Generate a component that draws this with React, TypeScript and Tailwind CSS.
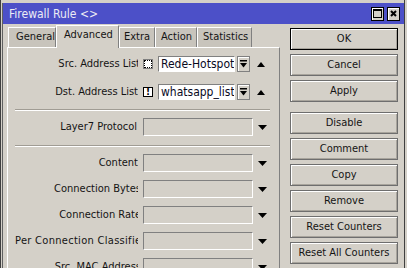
import React from "react";

// inner: width the text is right-aligned to; the 123px box clips it
const listRows = [
  { label: "Src. Address List", inner: "w-[125px]", value: "Rede-Hotspot", flag: "dotted" },
  { label: "Dst. Address List", inner: "w-[123px]", value: "whatsapp_list", flag: "bang" },
];

const comboRows = [
  { label: "Content", inner: "w-[123px]" },
  { label: "Connection Bytes", inner: "w-[126px]" },
  { label: "Connection Rate", inner: "w-[126px]" },
  { label: "Per Connection Classifier", inner: "w-[123px] tracking-[0.3px]" },
  { label: "Src. MAC Address", inner: "w-[126px]" },
];

const tabs = [
  { name: "General", w: "w-[48px]", pad: "pl-[7px]" },
  { name: "Advanced", w: "w-[63px]", pad: "pl-[7px]", active: true },
  { name: "Extra", w: "w-[36px]", pad: "pl-[4px]" },
  { name: "Action", w: "w-[42px]", pad: "pl-[5px]" },
  { name: "Statistics", w: "w-[55px]", pad: "pl-[5px]" },
];

const buttons = [
  ["OK", "Cancel", "Apply"],
  ["Disable", "Comment", "Copy", "Remove", "Reset Counters", "Reset All Counters"],
];

const sunken =
  "border border-t-[#808080] border-l-[#808080] border-b-white border-r-white";

function Label({ text, inner }: { text: string; inner: string }) {
  return (
    <div className="w-[123px] shrink-0 overflow-hidden">
      <div className={`${inner} whitespace-nowrap text-right text-[11px] text-[#141414]`}>{text}</div>
    </div>
  );
}

function DownArrow() {
  return (
    <svg width="9" height="5" viewBox="0 0 9 5">
      <polygon points="0,0 9,0 4.5,5" fill="#000" />
    </svg>
  );
}

function UpArrow() {
  return (
    <svg width="8" height="5" viewBox="0 0 8 5">
      <polygon points="0,5 8,5 4,0" fill="#000" />
    </svg>
  );
}

function DropMore() {
  return (
    <svg width="7" height="8" viewBox="0 0 7 8">
      <rect x="0" y="0" width="7" height="1.5" fill="#000" />
      <polygon points="0,3 7,3 3.5,7.5" fill="#000" />
    </svg>
  );
}

function Flag({ kind }: { kind: string }) {
  if (kind === "dotted") {
    return (
      <div className="ml-[5px] flex h-[10px] w-[10px] shrink-0 items-center justify-center border border-[#808080] bg-white">
        <div className="h-[8px] w-[8px] border border-dotted border-black" />
      </div>
    );
  }
  return (
    <div className="ml-[5px] flex h-[10px] w-[10px] shrink-0 items-center justify-center border border-black bg-white text-[10px] font-bold leading-none text-black">
      !
    </div>
  );
}

function Separator({ top }: { top: string }) {
  return <div className={`${top} mb-[3px] w-[255px] border-t border-b border-t-[#a09c94] border-b-white`} />;
}

function WinButton({ label, def }: { label: string; def?: boolean }) {
  return (
    <div
      className={`flex h-[22px] w-[108px] items-center justify-center border text-[11px] text-[#141414] shadow-[inset_1px_1px_0_#ffffff,inset_-1px_-1px_0_#a8a49c] ${
        def ? "border-black" : "border-[#6e6e6e]"
      }`}
    >
      {label}
    </div>
  );
}

export default function App() {
  return (
    <div className="h-[268px] w-[407px] overflow-hidden bg-[#d4d0c8] font-['DejaVu_Sans_Condensed','DejaVu_Sans',sans-serif]">
      <div className="h-[268px] w-[405px] border-x border-[#404040] pt-[3px]">
        <div className="ml-[1px] h-full border-l border-[#606060]">
          {/* title bar */}
          <div className="flex h-[21px] items-center justify-between bg-[#4c50c8] pl-[6px] pr-[4px]">
            <span className="text-[12px] text-[#ececf4]">Firewall Rule &lt;&gt;</span>
            <div className="flex gap-[3px]">
              <div className="flex h-[14px] w-[13px] items-center justify-center border border-black bg-[#d4d0c8] shadow-[inset_1px_1px_0_#ffffff]">
                <div className="h-[9px] w-[9px] border border-t-2 border-black" />
              </div>
              <div className="flex h-[14px] w-[13px] items-center justify-center border border-black bg-[#d4d0c8] shadow-[inset_1px_1px_0_#ffffff]">
                <svg width="7" height="7" viewBox="0 0 7 7">
                  <path d="M1 1 L6 6 M6 1 L1 6" stroke="#000" strokeWidth="2" />
                </svg>
              </div>
            </div>
          </div>

          <div className="flex">
            {/* left: tabs and panel */}
            <div className="ml-[4px] w-[273px]">
              <div className="ml-[1px] flex h-[23px] items-end">
                {tabs.map((t) => (
                  <div
                    key={t.name}
                    className={`${t.w} ${t.pad} flex shrink-0 items-center overflow-hidden whitespace-nowrap border-t border-l border-r border-t-white border-l-white border-r-[#808080] text-[11px] text-[#141414] ${
                      t.active
                        ? "relative z-10 mb-[-1px] h-[23px] bg-[#d4d0c8] pb-[3px]"
                        : "h-[20px] bg-[#c8c4bc]"
                    }`}
                  >
                    {t.name}
                  </div>
                ))}
              </div>

              <div className="h-[230px] border-t border-l border-r border-t-white border-l-white border-r-[#808080] pl-[7px] pt-[2px]">
                {listRows.map((r) => (
                  <div key={r.label} className="flex h-[28px] items-center">
                    <Label text={r.label} inner={r.inner} />
                    <Flag kind={r.flag} />
                    <div
                      className={`ml-[5px] flex h-[16px] w-[77px] items-center overflow-hidden whitespace-nowrap bg-white pl-[2px] text-[12px] text-[#0a0a1e] ${sunken}`}
                    >
                      {r.value}
                    </div>
                    <div className="ml-[2px] flex h-[16px] w-[13px] items-center justify-center border border-[#808080] shadow-[inset_1px_1px_0_#ffffff]">
                      <DropMore />
                    </div>
                    <div className="ml-[7px] flex">
                      <UpArrow />
                    </div>
                  </div>
                ))}

                <Separator top="mt-[3px]" />

                <div className="flex h-[26px] items-center">
                  <Label text="Layer7 Protocol" inner="w-[122px]" />
                  <div className={`ml-[5px] h-[18px] w-[110px] ${sunken}`} />
                  <div className="ml-[5px] flex">
                    <DownArrow />
                  </div>
                </div>

                <Separator top="mt-[5px]" />

                {comboRows.map((r) => (
                  <div key={r.label} className="flex h-[26px] items-center">
                    <Label text={r.label} inner={r.inner} />
                    <div className={`ml-[5px] h-[18px] w-[110px] ${sunken}`} />
                    <div className="ml-[5px] flex">
                      <DownArrow />
                    </div>
                  </div>
                ))}
              </div>
            </div>

            {/* right: buttons */}
            <div className="ml-[10px] flex flex-col pt-[4px]">
              {buttons.map((group, gi) => (
                <div key={gi} className={`flex flex-col gap-[4px] ${gi > 0 ? "mt-[10px]" : ""}`}>
                  {group.map((b) => (
                    <WinButton key={b} label={b} def={b === "OK"} />
                  ))}
                </div>
              ))}
            </div>
          </div>
        </div>
      </div>
    </div>
  );
}
